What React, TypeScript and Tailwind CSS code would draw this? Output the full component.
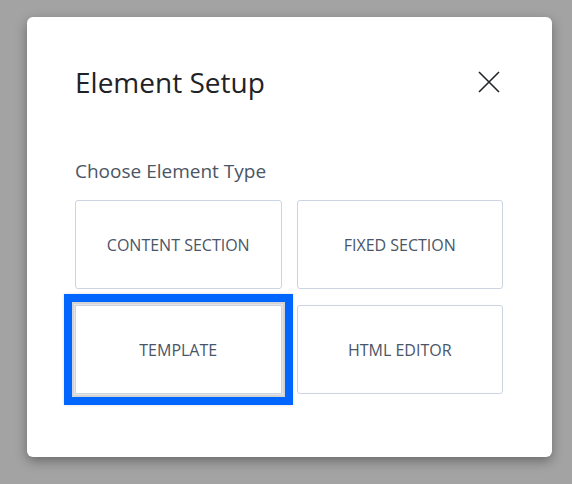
import React from "react";

const types = ["CONTENT SECTION", "FIXED SECTION", "TEMPLATE", "HTML EDITOR"];

export default function App() {
  const selected = "TEMPLATE";
  return (
    <div className="h-[484px] w-[572px] bg-[#a3a3a3] pt-[17px] pl-[27px] font-['Open_Sans',sans-serif]">
      <div className="h-[440px] w-[525px] rounded-md bg-white px-[48px] pt-[45px] shadow-[0_4px_12px_rgba(0,0,0,0.35)]">
        <div className="flex items-center justify-between">
          <h2 className="text-[28px] leading-[40px] text-[#1f2328]">Element Setup</h2>
          <button className="mr-[3px] text-[#212529]">
            <svg width="24" height="24" viewBox="0 0 24 24" fill="none" stroke="currentColor" strokeWidth="1.6">
              <path d="M2 2 L22 22 M22 2 L2 22" />
            </svg>
          </button>
        </div>
        <p className="mt-[57px] text-[19px] leading-[24px] text-[#4b5563]">Choose Element Type</p>
        <div className="mt-[17px] grid w-[428px] grid-cols-2 gap-x-[15px] gap-y-[16px]">
          {types.map((t) => (
            <button
              key={t}
              className={
                "flex h-[89px] items-center justify-center border border-[#cbd5e1] bg-white text-[16px] font-medium text-[#4a5568] " +
                (t === selected
                  ? "rounded-none shadow-[0_0_0_1px_#e5e5e5,0_0_0_3px_#d4d4d4,0_0_0_11px_#0066ff,0_0_3px_11px_rgba(0,0,0,0.15)]"
                  : "rounded-[3px]")
              }
            >
              {t}
            </button>
          ))}
        </div>
      </div>
    </div>
  );
}
